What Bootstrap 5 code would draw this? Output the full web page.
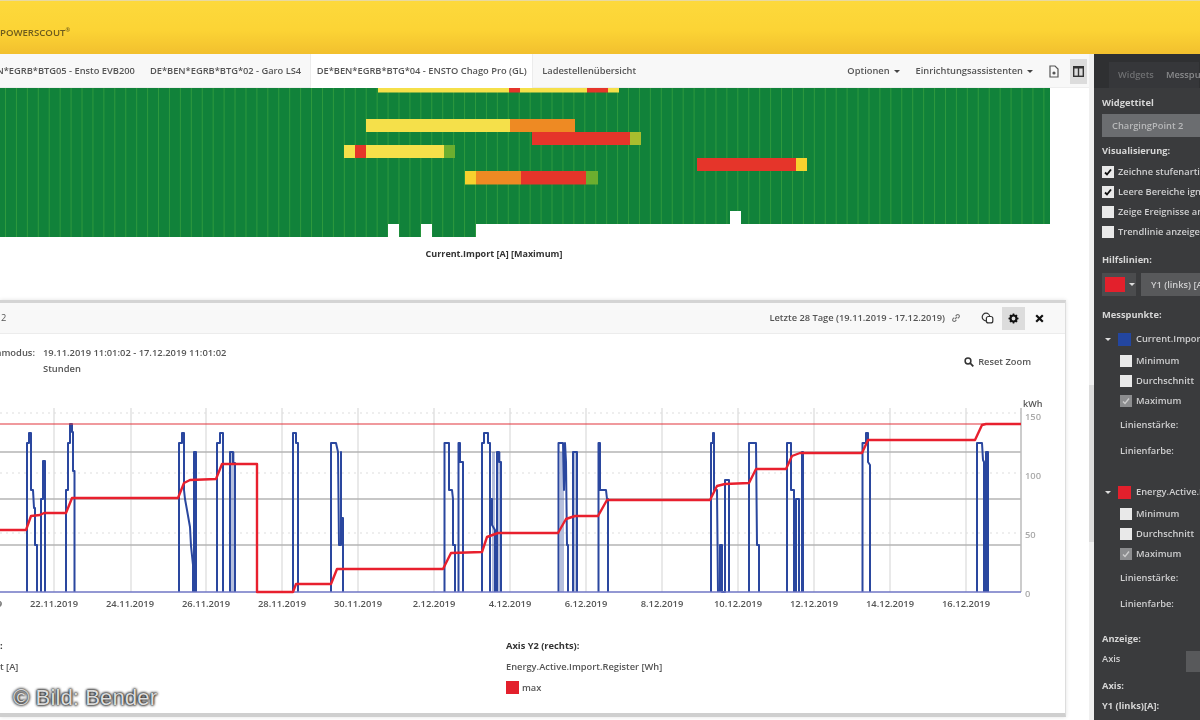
<!DOCTYPE html>
<html lang="de">
<head>
    <meta charset="UTF-8">
    <title>Powerscout</title>
    <link href="https://cdn.jsdelivr.net/npm/bootstrap@5.3.3/dist/css/bootstrap.min.css" rel="stylesheet">
    <style>
        html, body { height: 720px; overflow: hidden; }
        body { font-family: "Open Sans", "Liberation Sans", sans-serif; font-size: 9.3px; color: #444; background: #fff; position: relative; }
        svg text { font-family: "Open Sans", "Liberation Sans", sans-serif; }
        .soft-view { filter: blur(.4px); }
        .top-bar { height: 54px; background: linear-gradient(#fdd93c, #fcd435 55%, #f2c02e); box-shadow: inset 0 1px 0 #e8d9a0; padding-top: 25px; color: #6d5c1e; font-size: 9.6px; font-weight: 600; line-height: 15px; }
        .top-bar sup { font-size: 5.5px; top: -4px; }
        .page-row { height: 666px; }
        .main-col { width: 1094px; flex: none; overflow: hidden; border-right: 5px solid #f0f0f0; }
        .tab-bar { height: 34px; background: #f8f8f8; border-bottom: 1px solid #eee; font-weight: 600; color: #555; width: 1089px; }
        .tab-item { height: 34px; padding: 1px 6px 0; white-space: nowrap; }
        .tab-first { margin-left: -38px; margin-right: 3px; }
        .tab-second { margin-right: 3px; }
        .tab-active { background: #fff; width: 223px; flex: none; border-left: 1px solid #ececec; border-right: 1px solid #ececec; margin-right: 3px; justify-content: center; }
        .tab-tools { margin-left: auto; padding: 1px 2px 0 0; }
        .caret-down { display: inline-block; width: 0; height: 0; border: 3px solid transparent; border-top-color: #444; border-bottom: 0; margin-left: 4px; vertical-align: middle; }
        .tool-gap { margin-right: 12px; }
        .tool-btn { width: 17px; height: 25px; }
        .tool-on { background: #dcdcdc; }
        .heat-box { height: 212px; }
        .heat-box svg { display: block; }
        .heat-title { margin-top: 10px; text-align: center; width: 988px; font-weight: 700; font-size: 9px; color: #333; }
        .chart-card { width: 1066px; height: 417px; border-top: 3px solid #d4d4d4; border-right: 1px solid #ddd; border-bottom: 4px solid #cfcfcf; box-shadow: 0 0 4px rgba(0, 0, 0, .12); }
        .card-top { height: 31px; background: #f8f8f8; border-bottom: 1px solid #ececec; color: #555; padding-left: 1px; }
        .card-range { margin-left: auto; margin-right: 6px; font-weight: 600; white-space: nowrap; }
        .link-icon { margin-right: 15px; }
        .head-btn { width: 23px; height: 23px; margin-right: 3px; }
        .head-on { background: #dcdcdc; }
        .head-end { margin-right: 14px; }
        .info-wrap { height: 62px; padding-top: 11px; font-size: 9.4px; font-weight: 600; color: #555; }
        .info-name { width: 35px; justify-content: flex-end; white-space: nowrap; margin-right: 8px; }
        .info-line { height: 16px; }
        .reset-zoom { position: absolute; right: 34px; top: 52px; font-weight: 600; white-space: nowrap; color: #555; }
        .chart-svg { display: block; }
        .legend-wrap { height: 100px; font-weight: 600; color: #555; }
        .legend-left { width: 506px; flex: none; padding-top: 31px; }
        .legend-right { padding-top: 31px; }
        .legend-head { height: 21px; font-weight: 700; color: #333; }
        .legend-text { height: 21px; white-space: nowrap; }
        .legend-swatch { width: 13px; height: 13px; background: #e3202c; margin-right: 3px; }
        .side-col { flex: 1; background: #3a3b3d; color: #cfcfd0; font-weight: 600; overflow: hidden; white-space: nowrap; }
        .side-tabs { height: 34px; background: #2f3032; padding: 8px 0 0 15px; }
        .side-tab { width: 90px; height: 26px; background: #36373a; padding-left: 9px; color: #6f7072; }
        .side-tab span + span { margin-left: 12px; color: #8a8b8d; }
        .side-body { padding: 5px 0 0 8px; width: 240px; }
        .side-label { height: 20px; font-weight: 700; color: #d6d6d6; }
        .side-input { height: 23px; width: 200px; margin-top: 1px; background: #6b6d70; color: #b8b9ba; padding-left: 10px; }
        .gap-1px { margin-top: 1px; }
        .gap-4px { margin-top: 4px; }
        .gap-8px { margin-top: 8px; }
        .gap-9px { margin-top: 9px; }
        .gap-15px { margin-top: 15px; }
        .gap-21px { margin-top: 21px; }
        .gap-6px { margin-top: 6px; }
        .gap-7px { margin-top: 7px; }
        .gap-3px { margin-top: 3px; }
        .gap-2px { margin-top: 2px; }
        .check-line { height: 20px; }
        .check-box { width: 12px; height: 12px; background: #e9e9e9; margin-right: 4px; flex: none; }
        .check-grey { background: #8c8d8f; }
        .sub-line { margin-left: 18px; height: 20px; }
        .color-btn { width: 34px; height: 23px; background: #4b4c4e; padding-left: 3px; }
        .color-chip { width: 20px; height: 15px; background: #e3202c; }
        .caret-white { display: inline-block; width: 0; height: 0; border: 3px solid transparent; border-top-color: #ddd; border-bottom: 0; }
        .color-btn .caret-white { margin-left: 4px; }
        .select-btn { width: 120px; height: 23px; background: #58595b; margin-left: 5px; padding-left: 10px; }
        .group-line { height: 20px; padding-left: 3px; }
        .group-chip { width: 13px; height: 13px; margin: 0 5px 0 7px; }
        .chip-blue { background: #2346a0; }
        .chip-red { background: #e3202c; }
        .value-line { height: 20px; margin-left: 18px; }
        .axis-line { height: 20px; position: relative; }
        .axis-btn { position: absolute; left: 84px; top: 2px; width: 40px; height: 21px; background: #58595b; }
        .scroll-mark { position: absolute; left: 1089px; top: 385px; width: 5px; height: 157px; background: #dcdcdc; }
        .photo-credit { position: absolute; left: 13px; top: 685px; font-family: "Liberation Sans", Arial, sans-serif; font-size: 22.3px; line-height: 25px; color: #dcdcdc; text-shadow: 0 0 3px #222, 0 0 3px #222, 0 0 2px #222; }
    </style>
</head>
<body>
    <div class="top-bar soft-view"><span>POWERSCOUT<sup>®</sup></span></div>

    <div class="d-flex page-row soft-view">
        <div class="main-col">
            <div class="tab-bar d-flex align-items-center">
                <div class="tab-item d-flex align-items-center tab-first">DE*BEN*EGRB*BTG05 - Ensto EVB200</div>
                <div class="tab-item d-flex align-items-center tab-second">DE*BEN*EGRB*BTG*02 - Garo LS4</div>
                <div class="tab-item d-flex align-items-center tab-active">DE*BEN*EGRB*BTG*04 - ENSTO Chago Pro (GL)</div>
                <div class="tab-item d-flex align-items-center">Ladestellenübersicht</div>
                <div class="tab-tools d-flex align-items-center">
                    <span class="me-3">Optionen<i class="caret-down"></i></span>
                    <span class="tool-gap">Einrichtungsassistenten<i class="caret-down"></i></span>
                    <span class="tool-btn d-flex align-items-center justify-content-center me-2">
                        <svg width="10" height="13" viewBox="0 0 10 13"><path d="M1 1h5l3 3v8H1z" fill="none" stroke="#555" stroke-width="1.2"/><circle cx="5" cy="8" r="1.6" fill="#555"/></svg>
                    </span>
                    <span class="tool-btn tool-on d-flex align-items-center justify-content-center">
                        <svg width="11" height="11" viewBox="0 0 11 11"><rect x=".7" y=".7" width="9.6" height="9.6" fill="none" stroke="#333" stroke-width="1.4"/><path d="M.7 1.5h9.6" stroke="#333" stroke-width="2"/><path d="M5.5 1v9" stroke="#333" stroke-width="1.4"/></svg>
                    </span>
                </div>
            </div>

            <div class="heat-box">
                <svg id="heat" width="1094" height="149" viewBox="0 88 1094 149"></svg>
                <div class="heat-title">Current.Import [A] [Maximum]</div>
            </div>

            <div class="chart-card position-relative">
                <div class="card-top d-flex align-items-center">
                    <span>2</span>
                    <span class="card-range">Letzte 28 Tage (19.11.2019 - 17.12.2019)</span>
                    <svg class="link-icon" width="10" height="10" viewBox="0 0 10 10"><path d="M4 6l2-2M3.2 4.6L1.8 6a1.6 1.6 0 0 0 2.2 2.2l1.4-1.4M4.6 3.2L6 1.8A1.6 1.6 0 0 1 8.2 4L6.8 5.4" fill="none" stroke="#777" stroke-width="1.1"/></svg>
                    <span class="head-btn d-flex align-items-center justify-content-center">
                        <svg width="13" height="12" viewBox="0 0 13 12"><circle cx="5" cy="5" r="3.8" fill="none" stroke="#333" stroke-width="1.2"/><rect x="5.4" y="4.5" width="6.4" height="6.4" rx="2" fill="#fff" stroke="#333" stroke-width="1.2"/></svg>
                    </span>
                    <span class="head-btn head-on d-flex align-items-center justify-content-center">
                        <svg width="11" height="11" viewBox="0 0 11 11"><circle cx="5.5" cy="5.5" r="3" fill="none" stroke="#111" stroke-width="2.2"/><path d="M5.5 .5v2M5.5 8.5v2M.5 5.5h2M8.5 5.5h2M2 2l1.4 1.4M7.6 7.6L9 9M9 2L7.6 3.4M3.4 7.6L2 9" stroke="#111" stroke-width="1.6"/></svg>
                    </span>
                    <span class="head-btn head-end d-flex align-items-center justify-content-center">
                        <svg width="9" height="9" viewBox="0 0 9 9"><path d="M1.2 1.2l6.6 6.6M7.8 1.2L1.2 7.8" stroke="#111" stroke-width="2.2"/></svg>
                    </span>
                </div>
                <div class="info-wrap">
                    <div class="info-line d-flex align-items-center">
                        <div class="info-name d-flex">Zeitraummodus:</div>
                        <div>19.11.2019 11:01:02 - 17.12.2019 11:01:02</div>
                    </div>
                    <div class="info-line d-flex align-items-center">
                        <div class="info-name d-flex"></div>
                        <div>Stunden</div>
                    </div>
                </div>
                <div class="reset-zoom d-flex align-items-center">
                    <svg class="me-1" width="10" height="10" viewBox="0 0 10 10"><circle cx="4" cy="4" r="2.9" fill="none" stroke="#333" stroke-width="1.5"/><path d="M6.2 6.2L9.3 9.3" stroke="#333" stroke-width="1.8"/></svg>
                    Reset Zoom
                </div>
                <svg id="chart" class="chart-svg" width="1066" height="212" viewBox="0 396 1066 212"></svg>
                <div class="legend-wrap d-flex">
                    <div class="legend-left">
                        <div class="legend-head"><span class="ms-n1">:</span></div>
                        <div class="legend-text">t [A]</div>
                    </div>
                    <div class="legend-right">
                        <div class="legend-head">Axis Y2 (rechts):</div>
                        <div class="legend-text">Energy.Active.Import.Register [Wh]</div>
                        <div class="d-flex align-items-center"><span class="legend-swatch"></span>max</div>
                    </div>
                </div>
            </div>
        </div>

        <div class="side-col">
            <div class="side-tabs d-flex">
                <div class="side-tab d-flex align-items-center"><span>Widgets</span><span>Messpunkte</span></div>
            </div>
            <div class="side-body">
                <div class="side-label d-flex align-items-center">Widgettitel</div>
                <div class="side-input d-flex align-items-center">ChargingPoint 2</div>
                <div class="side-label d-flex align-items-center gap-4px">Visualisierung:</div>
                <div class="check-line d-flex align-items-center gap-1px"><span class="check-box d-flex"><svg width="12" height="12" viewBox="0 0 12 12"><path d="M3 6.5l2 2 4-5" fill="none" stroke="#111" stroke-width="1.8"/></svg></span>Zeichne stufenartig</div>
                <div class="check-line d-flex align-items-center"><span class="check-box d-flex"><svg width="12" height="12" viewBox="0 0 12 12"><path d="M3 6.5l2 2 4-5" fill="none" stroke="#111" stroke-width="1.8"/></svg></span>Leere Bereiche ignorieren</div>
                <div class="check-line d-flex align-items-center"><span class="check-box"></span>Zeige Ereignisse an</div>
                <div class="check-line d-flex align-items-center"><span class="check-box"></span>Trendlinie anzeigen</div>
                <div class="side-label d-flex align-items-center gap-8px">Hilfslinien:</div>
                <div class="d-flex gap-3px">
                    <div class="color-btn d-flex align-items-center"><span class="color-chip"></span><i class="caret-white"></i></div>
                    <div class="select-btn d-flex align-items-center">Y1 (links) [A]</div>
                </div>
                <div class="side-label d-flex align-items-center gap-9px">Messpunkte:</div>
                <div class="group-line d-flex align-items-center gap-4px"><i class="caret-white"></i><span class="group-chip chip-blue"></span>Current.Import [A]</div>
                <div class="sub-line d-flex align-items-center gap-2px"><span class="check-box"></span>Minimum</div>
                <div class="sub-line d-flex align-items-center"><span class="check-box"></span>Durchschnitt</div>
                <div class="sub-line d-flex align-items-center"><span class="check-box check-grey d-flex"><svg width="12" height="12" viewBox="0 0 12 12"><path d="M3 6.5l2 2 4-5" fill="none" stroke="#ccc" stroke-width="1.4"/></svg></span>Maximum</div>
                <div class="value-line d-flex align-items-center gap-4px">Linienstärke:</div>
                <div class="value-line d-flex align-items-center gap-6px">Linienfarbe:</div>
                <div class="group-line d-flex align-items-center gap-21px"><i class="caret-white"></i><span class="group-chip chip-red"></span>Energy.Active.Import</div>
                <div class="sub-line d-flex align-items-center gap-2px"><span class="check-box"></span>Minimum</div>
                <div class="sub-line d-flex align-items-center"><span class="check-box"></span>Durchschnitt</div>
                <div class="sub-line d-flex align-items-center"><span class="check-box check-grey d-flex"><svg width="12" height="12" viewBox="0 0 12 12"><path d="M3 6.5l2 2 4-5" fill="none" stroke="#ccc" stroke-width="1.4"/></svg></span>Maximum</div>
                <div class="value-line d-flex align-items-center gap-4px">Linienstärke:</div>
                <div class="value-line d-flex align-items-center gap-6px">Linienfarbe:</div>
                <div class="side-label d-flex align-items-center gap-15px">Anzeige:</div>
                <div class="axis-line d-flex align-items-center">Axis<span class="axis-btn"></span></div>
                <div class="side-label d-flex align-items-center gap-7px">Axis:</div>
                <div class="side-label d-flex align-items-center">Y1 (links)[A]:</div>
            </div>
        </div>
    </div>

    <div class="scroll-mark"></div>
    <div class="photo-credit">© Bild: Bender</div>

    <script>
        const NS = 'http://www.w3.org/2000/svg';

        function add(svg, tag, attrs, text) {
            const el = document.createElementNS(NS, tag);
            for (const key in attrs) el.setAttribute(key, attrs[key]);
            if (text) el.textContent = text;
            svg.appendChild(el);
        }

        // heat map: green ground, lighter cell lines, bars on top
        const heat = document.getElementById('heat');
        add(heat, 'rect', { x: 0, y: 88, width: 1050, height: 149, fill: '#11823a' });
        for (let x = 5; x < 1050; x += 10.93) {
            add(heat, 'rect', { x: x, y: 88, width: 1, height: 149, fill: '#2f9a3e' });
        }
        add(heat, 'rect', { x: 476, y: 224, width: 620, height: 13, fill: '#fff' });
        const Y = '#f5e04a', O = '#ee8a23', R = '#e5352a', G = '#6cae2f', D = '#f7d22e', L = '#a9bd2e';
        const bars = [
            [378, 88, 131, 4.5, Y], [509, 88, 11, 4.5, R], [520, 88, 67, 4.5, Y], [587, 88, 21, 4.5, R], [608, 88, 11, 4.5, Y],
            [366, 119, 144, 13, Y], [510, 119, 65, 13, O],
            [532, 132, 98, 13, R], [630, 132, 11, 13, L],
            [344, 145, 11, 13, Y], [355, 145, 11, 13, R], [366, 145, 78, 13, Y], [444, 145, 11, 13, G],
            [697, 158, 99, 13, R], [796, 158, 11, 13, D],
            [465, 171, 11, 13.5, D], [476, 171, 45, 13.5, O], [521, 171, 65, 13.5, R], [586, 171, 12, 13.5, G],
            [388, 224, 11, 13, '#fff'], [421, 224, 11, 13, '#fff'], [730, 211, 11, 13, '#fff']
        ];
        bars.forEach(b => add(heat, 'rect', { x: b[0], y: b[1], width: b[2], height: b[3], fill: b[4] }));

        // chart: coordinates are read straight off the page
        const chart = document.getElementById('chart');
        [413, 473, 533].forEach(y => add(chart, 'line', { x1: 0, x2: 1021, y1: y, y2: y, stroke: '#ddd', 'stroke-dasharray': '2 4' }));
        [54, 131, 206, 282, 358, 434, 510, 586, 662, 738, 814, 890, 966].forEach(x => add(chart, 'line', { x1: x, x2: x, y1: 408, y2: 592, stroke: '#dedede', 'stroke-width': 1.3 }));
        [452, 499, 545].forEach(y => add(chart, 'line', { x1: 0, x2: 1021, y1: y, y2: y, stroke: '#b5b5b5', 'stroke-width': 1.5 }));
        add(chart, 'line', { x1: 1021, x2: 1021, y1: 408, y2: 592, stroke: '#bbb', 'stroke-width': 1.5 });

        const pulses = [
            [27,592, 27,443, 29,443, 29,433, 31,433, 31,490, 33,490, 34,508, 35,508, 35,545, 37,545, 37,592],
            [41,592, 41,499, 43,499, 43,461, 45,461, 45,592],
            [66,592, 66,490, 68,490, 68,443, 70,443, 70,424, 72,424, 72,432, 73,432, 73,471, 74.5,471, 74.5,592],
            [179,592, 179,443, 182,443, 182,433, 184,433, 184,490, 185,499, 187,510, 190,527, 191,546, 193,565, 193,592],
            [194,592, 194,452, 196,452, 196,592],
            [217,592, 217,443, 220,443, 220,433, 223,433, 223,592],
            [230,592, 230,452, 233,452, 233,463, 235,463, 235,592],
            [293,592, 293,433, 296,433, 296,443, 298,443, 298,592],
            [331,592, 331,443, 336,443, 338,452, 339,545, 341,545, 341,452, 341,518, 343,518, 343,592],
            [444.5,592, 444.5,443, 449,443, 449,490, 452,490, 453,499, 453,545, 455,545, 455,592],
            [458.5,592, 458.5,443, 460,443, 460,462, 463,462, 463,592],
            [482,592, 482,443, 484,443, 484,433, 488,433, 488,443, 490,443, 490,592],
            [490,592, 490,499, 492,499, 492,525, 495,530, 495,592],
            [497,592, 497,452, 499,452, 499,462, 501,462, 501,592],
            [558.5,592, 558.5,443, 563,443, 564,490, 565,443, 566,462, 567,545, 568,545, 568,592],
            [573,592, 573,452, 577,452, 577,592],
            [598.5,592, 598.5,443, 600,443, 600,490, 606,490, 607,499, 608,499, 608,592],
            [711,592, 711,443, 713,443, 713,433, 714,433, 714,490, 717,490, 718,592],
            [720,592, 720,545, 722,545, 722,592, 725,592, 725,480, 729,480, 729,592],
            [749,592, 749,443, 756,443, 757,545, 759,545, 759,592],
            [787,592, 787,443, 791,443, 791,490, 794,490, 794,592],
            [796,592, 796,499, 799,499, 799,592],
            [802,592, 802,452, 803,452, 803,592],
            [862.5,592, 862.5,443, 866,443, 866,433, 868,433, 868,462, 870,465, 870,592],
            [977,592, 977,443, 982,443, 983,460, 984,462, 984,592],
            [986,592, 986,452, 988,452, 988,592]
        ];
        pulses.forEach(p => add(chart, 'polyline', { points: p.join(' '), fill: 'none', stroke: '#2a479f', 'stroke-width': 2, 'stroke-linejoin': 'round' }));
        [[230, 235], [492, 495], [497, 501], [560, 564], [573, 577]].forEach(s => {
            add(chart, 'rect', { x: s[0], y: 452, width: s[1] - s[0], height: 140, fill: '#2a479f', opacity: .35 });
        });
        add(chart, 'line', { x1: 0, x2: 1021, y1: 592, y2: 592, stroke: '#6f76c4', 'stroke-width': 1.6 });
        add(chart, 'line', { x1: 0, x2: 1021, y1: 424, y2: 424, stroke: '#e2343c', 'stroke-width': 1.2 });

        const red = [0,530, 26,530, 31,516, 40,515, 44,513, 66,513, 72,498, 178,498, 184,483, 190,480, 216,479, 222,464, 257,464, 257,592, 293,592, 296,584, 331,584, 337,569, 443,569, 451,553, 482,552, 487,537, 498,533, 558,533, 566,519, 575,516, 598,516, 607,500, 710,500, 717,486, 725,484, 749,483, 756,469, 786,469, 792,456, 800,453, 862,453, 868,440, 975,440, 982,425, 986,424, 1021,424];
        add(chart, 'polyline', { points: red.join(' '), fill: 'none', stroke: '#e8202e', 'stroke-width': 2.4, 'stroke-linejoin': 'round' });

        const labels = ['20.11.2019', '22.11.2019', '24.11.2019', '26.11.2019', '28.11.2019', '30.11.2019', '2.12.2019', '4.12.2019', '6.12.2019', '8.12.2019', '10.12.2019', '12.12.2019', '14.12.2019', '16.12.2019'];
        labels.forEach((t, i) => add(chart, 'text', { x: -22 + i * 76, y: 607, 'text-anchor': 'middle', 'font-size': 9.4, 'font-weight': 600, fill: '#555' }, t));
        [[150, 420], [100, 479], [50, 538], [0, 597]].forEach(v => add(chart, 'text', { x: 1025, y: v[1], 'font-size': 9.4, 'font-weight': 600, fill: '#aaa' }, String(v[0])));
        add(chart, 'text', { x: 1023, y: 407, 'font-size': 9, 'font-weight': 600, fill: '#555' }, 'kWh');
    </script>
    <script src="https://cdn.jsdelivr.net/npm/bootstrap@5.3.3/dist/js/bootstrap.bundle.min.js"></script>
</body>
</html>
